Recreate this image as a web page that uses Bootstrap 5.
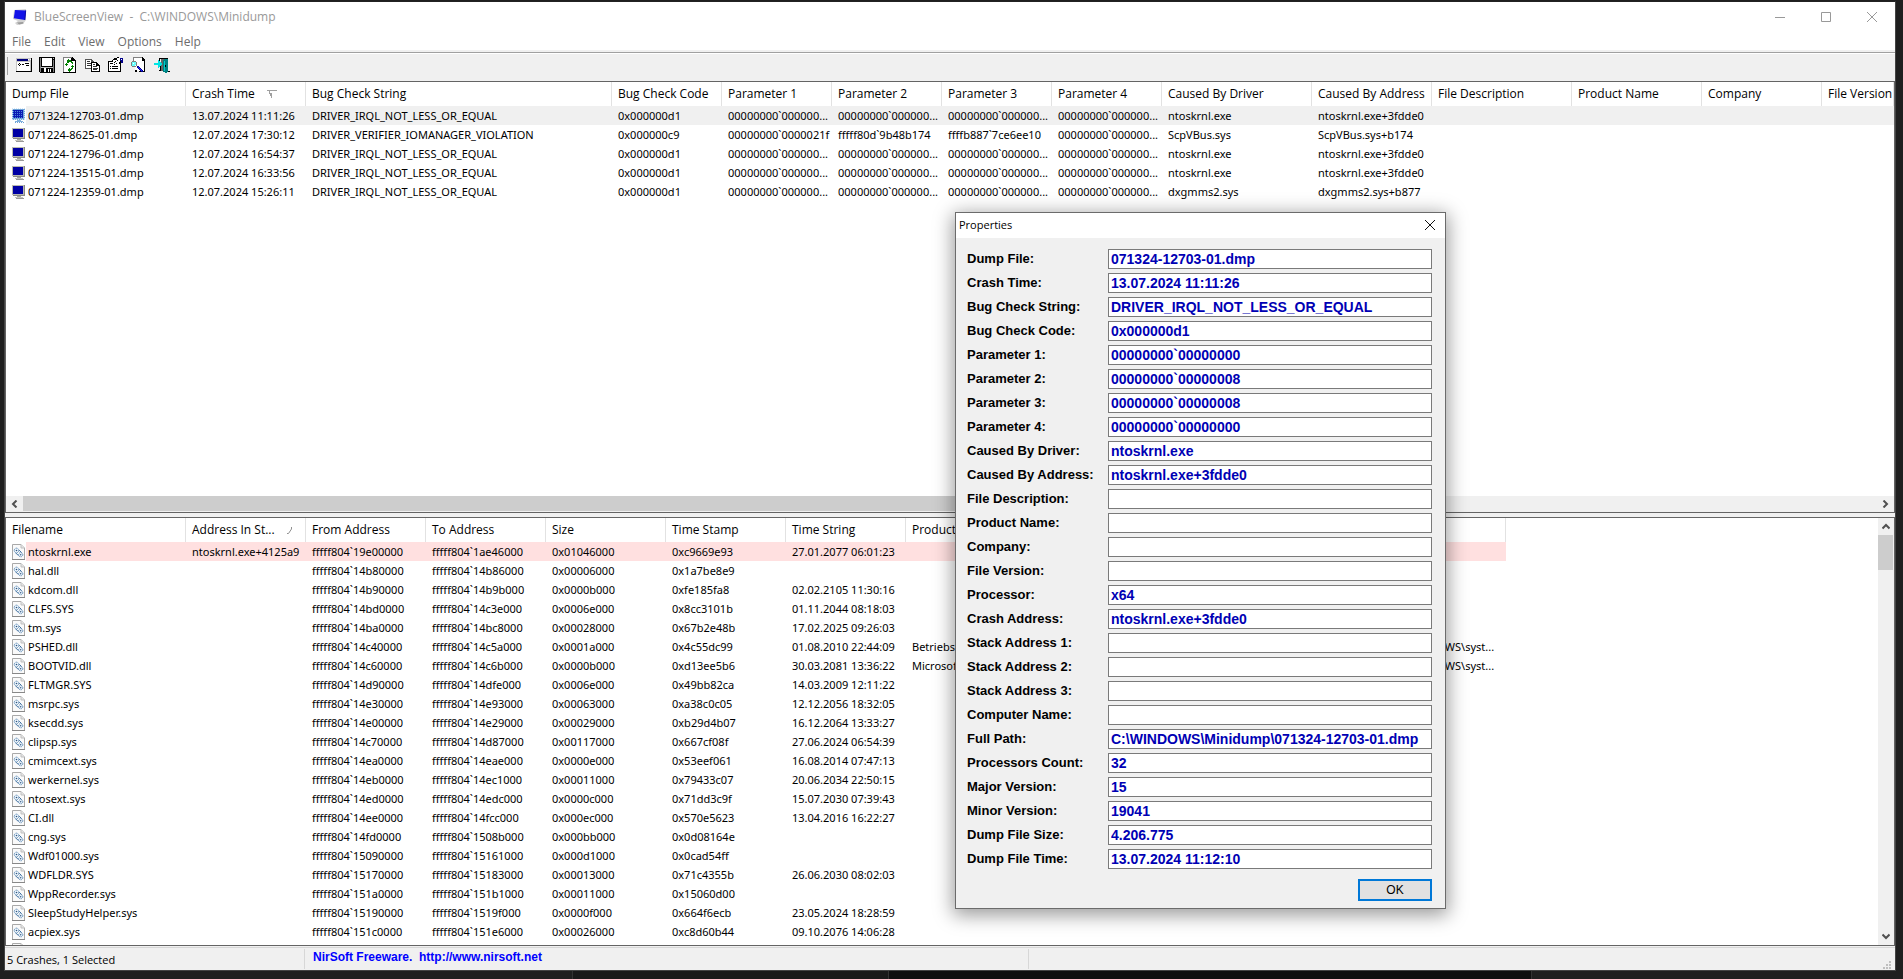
<!DOCTYPE html>
<html lang="en">
<head>
<meta charset="utf-8">
<meta name="viewport" content="width=device-width, initial-scale=1">
<title>BlueScreenView</title>
<link href="https://cdn.jsdelivr.net/npm/bootstrap@5.3.0/dist/css/bootstrap.min.css" rel="stylesheet">
<style>
  body { background: #1f1f1f; font: 12px/16px "Open Sans", "Noto Sans", sans-serif; color: #000; }
  svg { display: block; }
  button { color: inherit; }

  /* main window */
  .app-window { margin: 1px 7px 0 4px; border: 1px solid #444; border-top-color: #222; background: #f0f0f0; }
  .title-bar { height: 30px; background: #fff; color: #999; padding-left: 8px; gap: 6px; }
  .title-bar h1 { font-size: 12px; line-height: 16px; white-space: pre; }
  .win-btns { margin-right: 0; }
  .win-btn { width: 46px; height: 30px; border: 0; background: none; }
  .menu-strip { height: 18px; background: #fff; padding: 2px 0 0 7px; gap: 13px; }
  .menu-strip .nav-link { color: #6d6d6d; padding: 0; line-height: 16px; }
  .tool-strip { margin-top: 2px; border-top: 1px solid #a0a0a0; box-shadow: inset 0 1px #fff; height: 29px; padding: 4px 2px; gap: 7px; }
  .tool-strip button { border: 0; background: none; padding: 0; width: 16px; }
  .tool-grip { width: 1px; height: 18px; background: #a0a0a0; margin-right: 1px; }

  /* list panes */
  .pane { border: 1px solid #646464; background: #fff; min-height: 0; }
  .pane-top { flex: 432 1 0; }
  .pane-bottom { flex: 429 1 0; margin-top: 4px; }
  .view { overflow: hidden; min-width: 0; min-height: 0; }
  .grid.table { table-layout: fixed; margin: 0; color: #000; --bs-table-bg: transparent; }
  .grid.table > :not(caption) > * > * { padding: 0 0 0 6px; border: 0; white-space: nowrap; overflow: hidden; vertical-align: middle; }
  .grid th { height: 24px; font-weight: 400; box-shadow: inset -1px 0 #e2e2e2 !important; }
  .grid td { height: 19px; font-family: "Noto Sans", "Open Sans", sans-serif; font-size: 11px; line-height: 18px; }
  .grid tr.picked td { background: #f0f0f0; }
  .grid tr.flagged td { background: #ffe0e0; }
  .grid tr.picked td:first-child { background: linear-gradient(90deg, #fff 20px, #f0f0f0 20px); }
  .grid tr.flagged td:first-child { background: linear-gradient(90deg, #fff 20px, #ffe0e0 20px); }
  .drivers.table { width: 1500px; }
  .name-cell { gap: 3px; }
  .sort-head { gap: 12px; }
  .w120 { width: 120px; } .w110 { width: 110px; } .w130 { width: 130px; } .w140 { width: 140px; }
  .w150 { width: 150px; } .w180 { width: 180px; } .w306 { width: 306px; }

  .scroll-h { height: 16px; background: #f0f0f0; }
  .scroll-v { width: 16px; background: #f0f0f0; }
  .scroll-h button, .scroll-v button { border: 0; background: none; padding: 0; width: 17px; height: 17px; flex: none; }
  .scroll-h button { height: 15px; }
  .scroll-v button { width: 15px; }
  .thumb-h { width: 65%; height: 15px; background: #cdcdcd; }
  .thumb-v { width: 15px; height: 35px; background: #cdcdcd; }

  .status-strip { height: 24px; padding-top: 3px; box-shadow: inset 0 1px #f0f0f0, inset 0 2px #d7d7d7; font-size: 11px; }
  .status-strip > div { height: 20px; border-right: 1px solid #d7d7d7; }
  .status-strip > div:last-child { border: 0; }
  .status-count { width: 300px; padding: 3px 0 0 2px; }
  .status-link { width: 724px; padding-left: 8px; }
  .status-link a { font: bold 12px/16px "Liberation Sans", Arial, sans-serif; color: #00f; text-decoration: none; white-space: pre; }

  /* desktop strip below the window */
  .desk { height: 8px; }
  .desk span { border-right: 1px solid #333; }

  /* properties dialog */
  .props { left: 950px; top: 210px; width: 491px; border: 1px solid #6b6b6b; background: #f0f0f0; box-shadow: 0 4px 18px 2px rgba(0,0,0,.4); }
  .props header { height: 25px; background: #fff; padding: 0 0 2px 3px; }
  .props header h2 { font-size: 11px; line-height: 16px; }
  .props header button { width: 30px; height: 23px; border: 0; background: none; padding: 0; }
  .props form { padding: 11px 13px 7px 11px; }
  .fields { gap: 4px; }
  .field label { width: 141px; font: bold 13px/20px "Liberation Sans", Arial, sans-serif; }
  .field .form-control { flex: 1; min-width: 0; height: 20px; min-height: 0; border: 1px solid #7a7a7a; border-radius: 0; padding: 0 2px; background: #fff; color: #0000b4; font: bold 14px/18px "Liberation Sans", Arial, sans-serif; }
  .ok-btn { margin-top: 10px; width: 74px; height: 22px; padding: 0; border: 2px solid #0078d7; border-radius: 0; background: #e1e1e1; color: #000; font: 12px/16px "Liberation Sans", Arial, sans-serif; }
</style>
</head>
<body class="vh-100 d-flex flex-column overflow-hidden">

<svg class="d-none" aria-hidden="true">
  <symbol id="i-pc" viewBox="0 0 13 15" shape-rendering="crispEdges">
    <path fill="#b9b9b0" d="M0 1h12v10H0z"/><path fill="#8a8a84" d="M12 1h1v11H1v-1h11z"/>
    <path fill="#0000a4" d="M1 2h10v8H1z"/><path fill="#a8a8a0" d="M5 12h4v1H5z"/><path fill="#c4c4bc" d="M3 13h8v1H3z"/><path fill="#999" d="M4 14h8v1H4z"/>
  </symbol>
  <symbol id="i-pc-sel" viewBox="0 0 13 15" shape-rendering="crispEdges">
    <path fill="#6fa4d8" d="M0 1h13v11H0z"/><path fill="#0a1ab4" d="M1 2h10v8H1z"/>
    <path stroke="#4f86dc" stroke-dasharray="1 1" d="M1 3.500h10M1 5.500h10M1 7.500h10M1 9.500h10"/>
    <path stroke="#d4e6f6" stroke-dasharray="1 1" d="M0 .5h13M.5 1v11M12.500 0v12M0 11.500h13"/>
    <path fill="#7fb0dd" d="M5 12h4v1H5zM3 13h8v1H3z"/><path stroke="#6aa0d6" stroke-dasharray="1 1" d="M3 14.500h9"/>
  </symbol>
  <symbol id="i-dll" viewBox="0 0 13 16">
    <path fill="#fafafa" stroke="#a9a9a9" d="M.5.5h8.500l3.500 3.500v11.500H.5z"/><path fill="#e4e4e4" stroke="#c0c0c0" d="M9 .5V4h3.500"/>
    <path stroke="#888" d="M0 15.500h13"/>
    <g fill="#eef5fb" stroke="#5f8db8">
      <circle cx="4.500" cy="6.500" r="2.300" stroke-dasharray="1.300 .5"/>
      <circle cx="8.700" cy="10.700" r="2.100" stroke-dasharray="1.300 .5"/>
      <path fill="none" stroke="#3f6f9f" d="M7.200 6.200l2.300 2.300M3.800 9l2.600 2.600"/>
    </g>
    <circle cx="4.500" cy="6.500" r=".8" fill="#2c5580"/><circle cx="8.700" cy="10.700" r=".7" fill="#2c5580"/>
  </symbol>
</svg>

<main class="app-window flex-fill d-flex flex-column position-relative">
  <header class="title-bar d-flex align-items-center flex-shrink-0">
    <svg width="15" height="16" viewBox="0 0 15 16"><path fill="#d2d2d2" d="M1 1l12-1v11l-3 4-6 1-2-2 3-2L0 10z"/><path fill="#1212e8" d="M2 1l11 .6-1 9.400L.8 9.200z"/><path fill="#0c0ca8" d="M12.200 1.500l1 .1-1 9.400-1-.2z"/><path fill="#9c9c9c" d="M4 13.500l6-.5.500 1.500L6 15.500z"/></svg>
    <h1 class="m-0 fw-normal flex-fill">BlueScreenView  -  C:\WINDOWS\Minidump</h1>
    <div class="win-btns d-flex">
      <button class="win-btn" aria-label="Minimize"><svg class="m-auto" width="10" height="10"><path stroke="#999" d="M0 5.500h10"/></svg></button>
      <button class="win-btn" aria-label="Maximize"><svg class="m-auto" width="10" height="10"><path fill="none" stroke="#999" d="M.5.5h9v9h-9z"/></svg></button>
      <button class="win-btn" aria-label="Close"><svg class="m-auto" width="10" height="10"><path stroke="#999" d="M0 0l10 10M10 0L0 10"/></svg></button>
    </div>
  </header>

  <nav class="menu-strip nav flex-shrink-0">
    <a class="nav-link" href="#">File</a><a class="nav-link" href="#">Edit</a><a class="nav-link" href="#">View</a><a class="nav-link" href="#">Options</a><a class="nav-link" href="#">Help</a>
  </nav>

  <div class="tool-strip d-flex align-items-start flex-shrink-0" role="toolbar" aria-label="Tools">
    <span class="tool-grip"></span>
    <button aria-label="Advanced options"><svg width="16" height="16" shape-rendering="crispEdges"><path fill="#000" d="M0 1h16v14H0z"/><path fill="#c4c4c4" d="M0 1h15v13H0z"/><path fill="#fff" d="M1 5h13v9H1z"/><path fill="#00007c" d="M1 2h11v2H1z"/><path fill="#fff" d="M12 2h1v1h-1zM14 2h1v1h-1z"/><path fill="#000" d="M3 6h1v1H3zM2 7h1v1H2zM4 7h1v1H4zM6 7h2v1H6zM9 6h4v1H9zM10 8h3v1h-3zM3 8h1v1H3z"/></svg></button>
    <button aria-label="Save"><svg width="16" height="16" shape-rendering="crispEdges"><path fill="#000" d="M0 0h16v16H1v-1H0z"/><path fill="#808080" d="M1 1h1v14H1zM14 3h1v12h-1z"/><path fill="#fff" d="M3 1h10v8H3z"/><path fill="#c0c0c0" d="M2 10h12v1H2zM14 1h1v1h-1z"/><path fill="#fff" d="M5 11h2v4H5zM9 12h1v3H9zM11 12h1v3h-1z"/></svg></button>
    <button aria-label="Refresh"><svg width="16" height="16" shape-rendering="crispEdges"><path fill="#808080" d="M1 0h9v1H1zM1 0h1v16H1z"/><path fill="#fff" d="M2 1h8v3h3v11H2z"/><path fill="#000" d="M10 0h1v1h1v1h1v1h1v13H1v-1h12V4H9V1h1z"/><path fill="#008000" d="M6 2h1v1h2v1h1v1h1v2h-1V6H9V5H7v1H6V5H5V3h1zM4 6h1v3H4zM5 5h1v1H5zM3 7h3v1H3zM10 8h1v1h1v1h-1v2h-1v1H9v1H8v1H7v-1H6v-2h1v-1h1v1h1v-1h1v-1H9V9h1z"/></svg></button>
    <button aria-label="Copy"><svg width="16" height="16" shape-rendering="crispEdges"><path fill="#555" d="M0 2h7v1h1v1h1v8H0z"/><path fill="#fff" d="M1 3h5v2h2v6H1z"/><path fill="#333" d="M2 4h3v1H2zM2 6h4v1H2zM2 8h4v1H2z"/><path fill="#000" d="M6 5h6v1h1v1h1v1h1v7H6z"/><path fill="#fff" d="M7 6h4v3h3v5H7z"/><path fill="#333" d="M8 7h2v1H8zM8 9h4v1H8zM8 11h5v1H8zM8 12h4v1H8z"/></svg></button>
    <button aria-label="Properties"><svg width="16" height="16" shape-rendering="crispEdges"><path fill="#000" d="M0 4h4V3h1V2h1V1h3V0h2v1h2v1h1v4h-1v9H0z"/><path fill="#fff" d="M1 5h4V3h4v1h2v3h1v7H1z"/><path fill="#000" d="M2 6h3v1H2zM7 4h1v1H7zM6 5h1v1H6zM8 6h1v1H8zM6 7h1v1H6zM2 9h1v1H2zM4 9h6v1H4zM2 11h1v1H2zM4 11h6v1H4z"/><path fill="#fff" d="M9 1h4v3h-1v1h-1V4h-1V3H9z"/><path fill="#00008b" d="M12 1h3v5h-2V4h-1z"/><path fill="#fff" d="M13 2h1v1h-1z"/></svg></button>
    <button aria-label="Find"><svg width="16" height="16" shape-rendering="crispEdges"><path fill="#808080" d="M2 0h9v1H2zM2 0h1v5H2z"/><path fill="#fff" d="M3 1h9v3h1v10H4z"/><path fill="#000" d="M11 0h1v1h1v1h1v13H8v-1h5V4h-2zM4 13h2v2H4z"/><path fill="#808080" d="M1 4h4v1h1v4H5v1H1V9H0V5h1z"/><path fill="#6ff" d="M1 5h4v4H1z"/><path fill="#fff" d="M2 6h1v1H2zM4 8h1v1H4z"/><path fill="#000090" d="M6 9h2v1h1v1h1v1h1v1h1v2h-2v-1H9v-1H8v-1H7v-1H6z"/><path fill="#22f" d="M7 10h1v1h1v1h1v1h1v1h-1v-1H9v-1H8v-1H7z"/></svg></button>
    <button aria-label="Exit"><svg width="16" height="16" shape-rendering="crispEdges"><path fill="#000" d="M5 1h9v13h2v1H9v-1H5v-1h1V9h1v4h1V2H6v2H5z"/><path fill="#666" d="M7 2h3v12H7z"/><path fill="#008080" d="M9 3h1V2h4v13h-1v1h-2v-1H9z"/><path fill="#0cc" d="M10 4h1v10h-1z"/><path fill="#000" d="M11 8h1v2h-1z"/><path fill="#00e5e5" d="M0 6h4V3h1v1h1v1h1v1h1v2H7v1H6v1H5v1H4V8H0z"/></svg></button>
  </div>

  <section class="pane pane-top d-flex flex-column">
    <div class="view flex-fill">
      <table class="grid table" id="crashes">
        <colgroup><col class="w180"><col class="w120"><col class="w306"><col class="w110"><col class="w110"><col class="w110"><col class="w110"><col class="w110"><col class="w150"><col class="w120"><col class="w140"><col class="w130"><col class="w120"><col></colgroup>
        <thead><tr><th>Dump File</th><th><span class="sort-head d-flex align-items-center">Crash Time<svg width="11" height="8" fill="none" stroke="#a0a0a0" shape-rendering="crispEdges"><path d="M0 .5h10M2.500 1v3M3.500 3v3M4.500 3v5"/></svg></span></th><th>Bug Check String</th><th>Bug Check Code</th><th>Parameter 1</th><th>Parameter 2</th><th>Parameter 3</th><th>Parameter 4</th><th>Caused By Driver</th><th>Caused By Address</th><th>File Description</th><th>Product Name</th><th>Company</th><th>File Version</th></tr></thead>
        <tbody></tbody>
      </table>
    </div>
    <div class="scroll-h d-flex flex-shrink-0">
      <button aria-label="Scroll left"><svg class="m-auto" width="7" height="8" fill="none" stroke="#505050" stroke-width="2"><path d="M5.500 .5L2 4l3.500 3.500"/></svg></button>
      <div class="thumb-h me-auto"></div>
      <button aria-label="Scroll right"><svg class="m-auto" width="7" height="8" fill="none" stroke="#505050" stroke-width="2"><path d="M1.500 .5L5 4 1.500 7.500"/></svg></button>
    </div>
  </section>

  <section class="pane pane-bottom d-flex">
    <div class="view flex-fill">
      <table class="grid table drivers" id="drivers">
        <colgroup><col class="w180"><col span="11" class="w120"></colgroup>
        <thead><tr><th>Filename</th><th><span class="sort-head d-flex align-items-center">Address In St...<svg width="6" height="7" fill="none" stroke="#909090"><path d="M4.500 0v2L1.500 6.500H0"/></svg></span></th><th>From Address</th><th>To Address</th><th>Size</th><th>Time Stamp</th><th>Time String</th><th>Product Name</th><th></th><th></th><th></th><th></th></tr></thead>
        <tbody></tbody>
      </table>
    </div>
    <div class="scroll-v d-flex flex-column flex-shrink-0">
      <button aria-label="Scroll up"><svg class="m-auto" width="8" height="7" fill="none" stroke="#505050" stroke-width="2"><path d="M.5 5.500L4 2l3.500 3.500"/></svg></button>
      <div class="thumb-v mb-auto"></div>
      <button aria-label="Scroll down"><svg class="m-auto" width="8" height="7" fill="none" stroke="#505050" stroke-width="2"><path d="M.5 1.500L4 5l3.500-3.500"/></svg></button>
    </div>
  </section>

  <footer class="status-strip d-flex flex-shrink-0">
    <div class="status-count">5 Crashes, 1 Selected</div>
    <div class="status-link"><a href="#">NirSoft Freeware.  http://www.nirsoft.net</a></div>
    <div class="flex-fill d-flex justify-content-end align-items-end"><svg class="me-1" width="8" height="8" fill="#bfbfbf" shape-rendering="crispEdges"><path d="M6 0h2v2H6zM3 3h2v2H3zM6 3h2v2H6zM0 6h2v2H0zM3 6h2v2H3zM6 6h2v2H6z"/></svg></div>
  </footer>

  <section class="props position-absolute" role="dialog" aria-labelledby="props-title">
    <header class="d-flex align-items-center">
      <h2 class="m-0 fw-normal flex-fill" id="props-title">Properties</h2>
      <button aria-label="Close properties"><svg class="m-auto" width="10" height="10"><path stroke="#111" d="M0 0l10 10M10 0L0 10"/></svg></button>
    </header>
    <form class="d-flex flex-column">
      <div class="fields d-flex flex-column" id="fields"></div>
      <button type="button" class="btn ok-btn align-self-end">OK</button>
    </form>
  </section>
</main>

<div class="desk d-flex flex-shrink-0">
  <span style="flex:573"></span><span style="flex:315;background:#191919"></span><span style="flex:643;background:#0f0f0f"></span><span class="border-0" style="flex:372"></span>
</div>

<script src="https://cdn.jsdelivr.net/npm/bootstrap@5.3.0/dist/js/bootstrap.bundle.min.js"></script>
<script>
const Z = '00000000`000000...';
const crashes = [
  ['071324-12703-01.dmp', '13.07.2024 11:11:26', 'DRIVER_IRQL_NOT_LESS_OR_EQUAL', '0x000000d1', Z, Z, Z, Z, 'ntoskrnl.exe', 'ntoskrnl.exe+3fdde0'],
  ['071224-8625-01.dmp', '12.07.2024 17:30:12', 'DRIVER_VERIFIER_IOMANAGER_VIOLATION', '0x000000c9', '00000000`0000021f', 'fffff80d`9b48b174', 'ffffb887`7ce6ee10', Z, 'ScpVBus.sys', 'ScpVBus.sys+b174'],
  ['071224-12796-01.dmp', '12.07.2024 16:54:37', 'DRIVER_IRQL_NOT_LESS_OR_EQUAL', '0x000000d1', Z, Z, Z, Z, 'ntoskrnl.exe', 'ntoskrnl.exe+3fdde0'],
  ['071224-13515-01.dmp', '12.07.2024 16:33:56', 'DRIVER_IRQL_NOT_LESS_OR_EQUAL', '0x000000d1', Z, Z, Z, Z, 'ntoskrnl.exe', 'ntoskrnl.exe+3fdde0'],
  ['071224-12359-01.dmp', '12.07.2024 15:26:11', 'DRIVER_IRQL_NOT_LESS_OR_EQUAL', '0x000000d1', Z, Z, Z, Z, 'dxgmms2.sys', 'dxgmms2.sys+b877']
];
/* name, from, to, size, stamp, time, product, full path */
const drivers = [
  ['ntoskrnl.exe', '19e00000', '1ae46000', '01046000', 'c9669e93', '27.01.2077 06:01:23'],
  ['hal.dll', '14b80000', '14b86000', '00006000', '1a7be8e9', ''],
  ['kdcom.dll', '14b90000', '14b9b000', '0000b000', 'fe185fa8', '02.02.2105 11:30:16'],
  ['CLFS.SYS', '14bd0000', '14c3e000', '0006e000', '8cc3101b', '01.11.2044 08:18:03'],
  ['tm.sys', '14ba0000', '14bc8000', '00028000', '67b2e48b', '17.02.2025 09:26:03'],
  ['PSHED.dll', '14c40000', '14c5a000', '0001a000', '4c55dc99', '01.08.2010 22:44:09', 'Betriebssystem', 'C:\\WINDOWS\\syst...'],
  ['BOOTVID.dll', '14c60000', '14c6b000', '0000b000', 'd13ee5b6', '30.03.2081 13:36:22', 'Microsoft', 'C:\\WINDOWS\\syst...'],
  ['FLTMGR.SYS', '14d90000', '14dfe000', '0006e000', '49bb82ca', '14.03.2009 12:11:22'],
  ['msrpc.sys', '14e30000', '14e93000', '00063000', 'a38c0c05', '12.12.2056 18:32:05'],
  ['ksecdd.sys', '14e00000', '14e29000', '00029000', 'b29d4b07', '16.12.2064 13:33:27'],
  ['clipsp.sys', '14c70000', '14d87000', '00117000', '667cf08f', '27.06.2024 06:54:39'],
  ['cmimcext.sys', '14ea0000', '14eae000', '0000e000', '53eef061', '16.08.2014 07:47:13'],
  ['werkernel.sys', '14eb0000', '14ec1000', '00011000', '79433c07', '20.06.2034 22:50:15'],
  ['ntosext.sys', '14ed0000', '14edc000', '0000c000', '71dd3c9f', '15.07.2030 07:39:43'],
  ['CI.dll', '14ee0000', '14fcc000', '000ec000', '570e5623', '13.04.2016 16:22:27'],
  ['cng.sys', '14fd0000', '1508b000', '000bb000', '0d08164e', ''],
  ['Wdf01000.sys', '15090000', '15161000', '000d1000', '0cad54ff', ''],
  ['WDFLDR.SYS', '15170000', '15183000', '00013000', '71c4355b', '26.06.2030 08:02:03'],
  ['WppRecorder.sys', '151a0000', '151b1000', '00011000', '15060d00', ''],
  ['SleepStudyHelper.sys', '15190000', '1519f000', '0000f000', '664f6ecb', '23.05.2024 18:28:59'],
  ['acpiex.sys', '151c0000', '151e6000', '00026000', 'c8d60b44', '09.10.2076 14:06:28'],
  ['']
];
const fields = [
  ['Dump File', '071324-12703-01.dmp'], ['Crash Time', '13.07.2024 11:11:26'], ['Bug Check String', 'DRIVER_IRQL_NOT_LESS_OR_EQUAL'],
  ['Bug Check Code', '0x000000d1'], ['Parameter 1', '00000000`00000000'], ['Parameter 2', '00000000`00000008'], ['Parameter 3', '00000000`00000008'],
  ['Parameter 4', '00000000`00000000'], ['Caused By Driver', 'ntoskrnl.exe'], ['Caused By Address', 'ntoskrnl.exe+3fdde0'], ['File Description', ''],
  ['Product Name', ''], ['Company', ''], ['File Version', ''], ['Processor', 'x64'], ['Crash Address', 'ntoskrnl.exe+3fdde0'],
  ['Stack Address 1', ''], ['Stack Address 2', ''], ['Stack Address 3', ''], ['Computer Name', ''], ['Full Path', 'C:\\WINDOWS\\Minidump\\071324-12703-01.dmp'],
  ['Processors Count', '32'], ['Major Version', '15'], ['Minor Version', '19041'], ['Dump File Size', '4.206.775'], ['Dump File Time', '13.07.2024 11:12:10']
];
const nameCell = (icon, h, name) => `<td><span class="name-cell d-flex align-items-center"><svg width="13" height="${h}"><use href="#${icon}"/></svg>${name}</span></td>`;
const cells = list => list.map(v => `<td>${v}</td>`).join('');

document.querySelector('#crashes tbody').innerHTML = crashes.map((r, i) =>
  `<tr class="${i ? '' : 'picked'}">${nameCell(i ? 'i-pc' : 'i-pc-sel', 15, r[0])}${cells(r.slice(1).concat('', '', '', ''))}</tr>`).join('');

document.querySelector('#drivers tbody').innerHTML = drivers.map((r, i) => {
  const [name, from, to, size, stamp, time = '', product = '', path = ''] = r;
  const rest = from ? ['fffff804`' + from, 'fffff804`' + to, '0x' + size, '0x' + stamp] : ['', '', '', ''];
  return `<tr class="${i ? '' : 'flagged'}">${nameCell('i-dll', 16, name)}${cells([i ? '' : 'ntoskrnl.exe+4125a9', ...rest, time, product, '', '', '', path])}</tr>`;
}).join('');

document.querySelector('#fields').innerHTML = fields.map(([label, value], i) =>
  `<div class="field d-flex"><label for="f${i}">${label}:</label><input class="form-control" id="f${i}" type="text" readonly value="${value}"></div>`).join('');
</script>
</body>
</html>
